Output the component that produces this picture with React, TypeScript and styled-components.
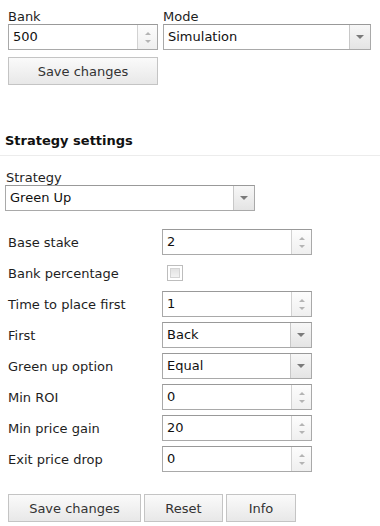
import React from 'react';
import styled, { createGlobalStyle } from 'styled-components';

const GlobalStyle = createGlobalStyle`
  html, body {
    margin: 0;
    padding: 0;
    background: #fff;
  }
  body {
    font-family: 'DejaVu Sans', Verdana, sans-serif;
    font-size: 13px;
    color: #1e1e1e;
  }
`;

const Page = styled.div`
  width: 380px;
  height: 526px;
  overflow: hidden;
  padding-top: 9px;
  box-sizing: border-box;
`;

const TopRow = styled.div`
  display: flex;
  gap: 5px;
  padding-left: 8px;
`;

const Field = styled.div<{ width: number }>`
  display: flex;
  flex-direction: column;
  width: ${props => props.width}px;
`;

const Label = styled.div`
  height: 15px;
  line-height: 15px;
  font-size: 13px;
`;

const Box = styled.div<{ width?: number }>`
  display: flex;
  box-sizing: border-box;
  height: 26px;
  width: ${props => (props.width ? `${props.width}px` : '100%')};
  border: 1px solid #a9a9a9;
  border-top-color: #999;
  background: #fff;
`;

const Value = styled.div`
  flex: 1;
  padding-left: 4px;
  line-height: 24px;
  font-size: 13px;
  color: #111;
  white-space: nowrap;
  overflow: hidden;
`;

const Spinner = styled.div`
  width: 19px;
  display: flex;
  flex-direction: column;
  align-items: center;
  justify-content: center;
  gap: 5px;
  border-left: 1px solid #d2d2d2;
  background: linear-gradient(#fdfdfd, #efefef);
`;

const Arrow = styled.div<{ up?: boolean; dark?: boolean }>`
  width: 0;
  height: 0;
  border-left: ${props => (props.dark ? 4 : 3)}px solid transparent;
  border-right: ${props => (props.dark ? 4 : 3)}px solid transparent;
  ${props =>
    props.up
      ? `border-bottom: 3px solid #b4b4b4;`
      : `border-top: ${props.dark ? 4 : 3}px solid ${props.dark ? '#7a7a7a' : '#b4b4b4'};`}
`;

const DropButton = styled.div`
  width: 20px;
  display: flex;
  align-items: center;
  justify-content: center;
  border-left: 1px solid #c8c8c8;
  background: linear-gradient(#f7f7f7, #e4e4e4);
`;

const Button = styled.button<{ width: number }>`
  box-sizing: border-box;
  width: ${props => props.width}px;
  height: 28px;
  margin: 0;
  padding: 0;
  border: 1px solid #c4c4c4;
  background: linear-gradient(#fafafa, #e8e8e8);
  font-family: 'DejaVu Sans', Verdana, sans-serif;
  font-size: 13px;
  color: #333;
  cursor: pointer;
`;

const SaveTop = styled.div`
  padding: 7px 0 0 8px;
`;

const Heading = styled.h3`
  margin: 48px 0 0 0;
  padding: 0 0 6px 5px;
  font-size: 13px;
  font-weight: bold;
  color: #111;
  line-height: 16px;
  border-bottom: 1px solid #ececec;
`;

const StrategyField = styled.div`
  padding: 14px 0 0 5px;
  display: flex;
  flex-direction: column;
  width: 250px;
`;

const StrategyLabel = styled(Label)`
  padding-left: 1px;
`;

const Settings = styled.div`
  display: grid;
  grid-template-columns: 154px 150px;
  grid-auto-rows: 26px;
  row-gap: 5px;
  padding: 18px 0 0 8px;
`;

const RowLabel = styled.div`
  display: flex;
  align-items: center;
  font-size: 13px;
  color: #1e1e1e;
  white-space: nowrap;
`;

const CheckCell = styled.div`
  display: flex;
  align-items: center;
  padding-left: 5px;
`;

const Checkbox = styled.div`
  box-sizing: border-box;
  width: 16px;
  height: 16px;
  border: 1px solid #bdbdbd;
  background: #fff;
  padding: 2px;
  &::after {
    content: '';
    display: block;
    width: 100%;
    height: 100%;
    background: linear-gradient(#e2e2e2, #f2f2f2);
    border: 1px solid #d4d4d4;
    box-sizing: border-box;
  }
`;

const ButtonBar = styled.div`
  display: flex;
  gap: 3px;
  padding: 22px 0 0 8px;
`;

const NumberInput = ({ value, width }: { value: string; width?: number }) => (
  <Box width={width}>
    <Value>{value}</Value>
    <Spinner>
      <Arrow up />
      <Arrow />
    </Spinner>
  </Box>
);

const Select = ({ value, width }: { value: string; width?: number }) => (
  <Box width={width}>
    <Value>{value}</Value>
    <DropButton>
      <Arrow dark />
    </DropButton>
  </Box>
);

type Setting = { label: string; kind: 'number' | 'select' | 'check'; value?: string };

const settings: Setting[] = [
  { label: 'Base stake', kind: 'number', value: '2' },
  { label: 'Bank percentage', kind: 'check' },
  { label: 'Time to place first', kind: 'number', value: '1' },
  { label: 'First', kind: 'select', value: 'Back' },
  { label: 'Green up option', kind: 'select', value: 'Equal' },
  { label: 'Min ROI', kind: 'number', value: '0' },
  { label: 'Min price gain', kind: 'number', value: '20' },
  { label: 'Exit price drop', kind: 'number', value: '0' },
];

export default function App() {
  return (
    <Page>
      <GlobalStyle />
      <TopRow>
        <Field width={150}>
          <Label>Bank</Label>
          <NumberInput value="500" />
        </Field>
        <Field width={208}>
          <Label>Mode</Label>
          <Select value="Simulation" />
        </Field>
      </TopRow>
      <SaveTop>
        <Button width={150}>Save changes</Button>
      </SaveTop>

      <Heading>Strategy settings</Heading>

      <StrategyField>
        <StrategyLabel>Strategy</StrategyLabel>
        <Select value="Green Up" />
      </StrategyField>

      <Settings>
        {settings.map(s => (
          <React.Fragment key={s.label}>
            <RowLabel>{s.label}</RowLabel>
            {s.kind === 'number' && <NumberInput value={s.value ?? ''} />}
            {s.kind === 'select' && <Select value={s.value ?? ''} />}
            {s.kind === 'check' && (
              <CheckCell>
                <Checkbox />
              </CheckCell>
            )}
          </React.Fragment>
        ))}
      </Settings>

      <ButtonBar>
        <Button width={133}>Save changes</Button>
        <Button width={79}>Reset</Button>
        <Button width={70}>Info</Button>
      </ButtonBar>
    </Page>
  );
}
